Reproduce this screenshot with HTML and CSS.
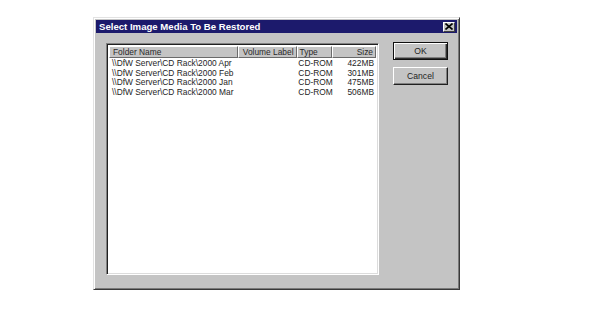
FILE: index.html
```html
<!DOCTYPE html>
<html>
<head>
<meta charset="utf-8">
<link rel="stylesheet" href="styles.css">
</head>
<body>
<div class="dialog">
  <div class="titlebar">
    <span class="title">Select Image Media To Be Restored</span>
    <span class="close"><svg width="8" height="7" viewBox="0 0 8 7"><path d="M0.5 0.5 L7.5 6.5 M7.5 0.5 L0.5 6.5" stroke="#000" stroke-width="1.6"/></svg></span>
  </div>
  <div class="content">
    <div class="listbox">
      <div class="row header">
        <div class="cell c1 hd">Folder Name</div>
        <div class="cell c2 hd">Volume Label</div>
        <div class="cell c3 hd">Type</div>
        <div class="cell c4 hd right">Size</div>
      </div>
      <div class="row">
        <div class="cell c1">\\DfW Server\CD Rack\2000 Apr</div>
        <div class="cell c2"></div>
        <div class="cell c3">CD-ROM</div>
        <div class="cell c4 right">422MB</div>
      </div>
      <div class="row">
        <div class="cell c1">\\DfW Server\CD Rack\2000 Feb</div>
        <div class="cell c2"></div>
        <div class="cell c3">CD-ROM</div>
        <div class="cell c4 right">301MB</div>
      </div>
      <div class="row">
        <div class="cell c1">\\DfW Server\CD Rack\2000 Jan</div>
        <div class="cell c2"></div>
        <div class="cell c3">CD-ROM</div>
        <div class="cell c4 right">475MB</div>
      </div>
      <div class="row">
        <div class="cell c1">\\DfW Server\CD Rack\2000 Mar</div>
        <div class="cell c2"></div>
        <div class="cell c3">CD-ROM</div>
        <div class="cell c4 right">506MB</div>
      </div>
    </div>
    <div class="buttons">
      <div class="btn default"><span>OK</span></div>
      <div class="btn"><span>Cancel</span></div>
    </div>
  </div>
</div>
</body>
</html>
```

FILE: styles.css
```css
html, body {
  margin: 0;
  padding: 0;
  background: #ffffff;
}
body {
  font-family: "Liberation Sans", Arial, sans-serif;
  width: 605px;
  height: 323px;
  overflow: hidden;
}
.dialog {
  box-sizing: border-box;
  margin: 17px 0 0 93px;
  width: 367px;
  height: 273px;
  background: #c4c4c4;
  border-top: 1px solid #e2e2e2;
  border-left: 1px solid #e2e2e2;
  border-right: 1px solid #3a3a3a;
  border-bottom: 1px solid #3a3a3a;
  box-shadow: inset 1px 1px 0 #ffffff, inset -1px -1px 0 #7a7a7a;
  padding: 2px;
  display: flex;
  flex-direction: column;
}
.titlebar {
  height: 13px;
  background: #1c1a6c;
  display: flex;
  align-items: center;
  justify-content: space-between;
  padding: 0 2px 0 3px;
}
.title {
  color: #ffffff;
  font-weight: bold;
  font-size: 9.6px;
  white-space: nowrap;
}
.close {
  box-sizing: border-box;
  width: 12px;
  height: 10px;
  background: #c4c4c4;
  border-top: 1px solid #ffffff;
  border-left: 1px solid #ffffff;
  border-right: 1px solid #404040;
  border-bottom: 1px solid #404040;
  display: flex;
  align-items: center;
  justify-content: center;
}
.close svg { display: block; }
.content {
  display: flex;
  padding: 10px 0 0 10px;
}
.listbox {
  box-sizing: border-box;
  width: 273px;
  height: 232px;
  background: #ffffff;
  border-top: 1px solid #808080;
  border-left: 1px solid #808080;
  border-right: 1px solid #ffffff;
  border-bottom: 1px solid #ffffff;
  box-shadow: inset 1px 1px 0 #202020, inset -1px -1px 0 #dcdcdc;
  padding: 2px 2px 0 2px;
  font-size: 8.4px;
  color: #1e1e1e;
}
.row {
  display: flex;
  height: 9.7px;
  line-height: 9.7px;
  white-space: nowrap;
}
.row.header {
  height: 12px;
  line-height: 11px;
  margin-bottom: 1px;
}
.cell {
  box-sizing: border-box;
  padding: 0 2px;
}
.c1 { overflow: hidden; }
.hd {
  background: #c4c4c4;
  border-top: 1px solid #ffffff;
  border-left: 1px solid #ffffff;
  border-right: 1px solid #6a6a6a;
  border-bottom: 1px solid #6a6a6a;
  padding: 0 2px;
  color: #2a2a2a;
}
.c1 { width: 130px; padding-left: 3px; }
.c2 { width: 59px; text-align: right; }
.c3 { width: 36px; padding-left: 2px; padding-right: 0; }
.c4 { width: 44px; }
.right { text-align: right; }
.buttons {
  display: flex;
  flex-direction: column;
  gap: 7px;
  margin-left: 14px;
  margin-top: -1px;
}
.btn {
  box-sizing: border-box;
  width: 55px;
  height: 18px;
  background: #c4c4c4;
  border-top: 1px solid #ffffff;
  border-left: 1px solid #ffffff;
  border-right: 1px solid #202020;
  border-bottom: 1px solid #202020;
  box-shadow: inset -1px -1px 0 #808080;
  display: flex;
  align-items: center;
  justify-content: center;
  font-size: 8.6px;
  color: #1e1e1e;
}
.btn.default {
  border: 1px solid #101010;
  box-shadow: inset 1px 1px 0 #ffffff, inset -1px -1px 0 #303030, inset -2px -2px 0 #808080;
}
```
